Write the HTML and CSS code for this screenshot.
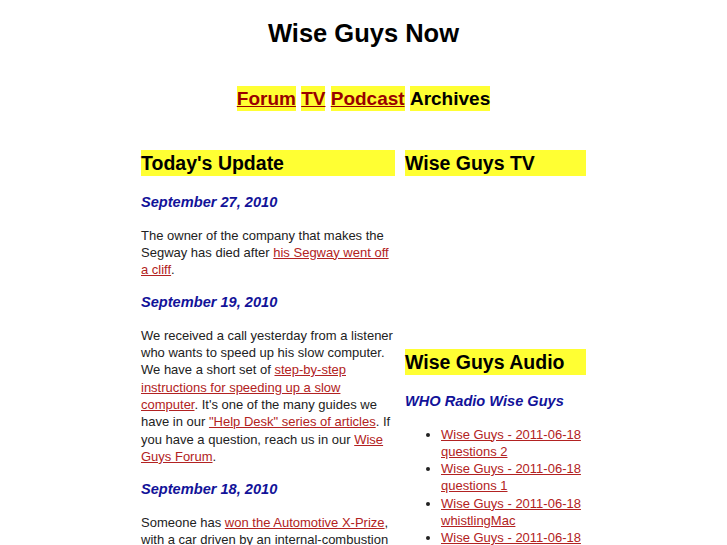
FILE: index.html
```html
<!DOCTYPE html>
<html>
<head>
<meta charset="utf-8">
<title>Wise Guys Now</title>
<link rel="stylesheet" href="styles.css">
</head>
<body>
<div class="page">
  <h1 class="site-title">Wise Guys Now</h1>
  <p class="nav">
    <a class="nav-item" href="#">Forum</a> <a class="nav-item" href="#">TV</a> <a class="nav-item" href="#">Podcast</a> <span class="nav-item nav-current">Archives</span>
  </p>
  <div class="columns">
    <div class="main">
      <h2 class="section-title">Today's Update</h2>
      <h3 class="date">September 27, 2010</h3>
      <p class="entry">The owner of the company that makes the Segway has died after <a href="#">his Segway went off a cliff</a>.</p>
      <h3 class="date">September 19, 2010</h3>
      <p class="entry">We received a call yesterday from a listener who wants to speed up his slow computer. We have a short set of <a href="#">step-by-step instructions for speeding up a slow computer</a>. It's one of the many guides we have in our <a href="#">"Help Desk" series of articles</a>. If you have a question, reach us in our <a href="#">Wise Guys Forum</a>.</p>
      <h3 class="date">September 18, 2010</h3>
      <p class="entry">Someone has <a href="#">won the Automotive X-Prize</a>, with a car driven by an internal-combustion engine that gets more than 100 miles per gallon.</p>
    </div>
    <div class="side">
      <h2 class="section-title">Wise Guys TV</h2>
      <div class="video"></div>
      <h2 class="section-title">Wise Guys Audio</h2>
      <h3 class="date">WHO Radio Wise Guys</h3>
      <ul class="audio-list">
        <li><a href="#">Wise Guys - 2011-06-18 questions 2</a></li>
        <li><a href="#">Wise Guys - 2011-06-18 questions 1</a></li>
        <li><a href="#">Wise Guys - 2011-06-18 whistlingMac</a></li>
        <li><a href="#">Wise Guys - 2011-06-18 intro</a></li>
      </ul>
    </div>
  </div>
</div>
</body>
</html>
```
FILE: styles.css
```css
html, body {
  margin: 0;
  padding: 0;
  background: #ffffff;
}
body {
  font-family: "Liberation Sans", Arial, sans-serif;
  color: #222222;
}
.page {
  width: 445px;
  margin: 0 auto;
}
.site-title {
  font-size: 25.5px;
  line-height: 28px;
  font-weight: bold;
  text-align: center;
  color: #000000;
  margin: 19px 0 0;
}
.nav {
  text-align: center;
  font-size: 19px;
  font-weight: bold;
  line-height: 25px;
  margin: 39px 0 0;
}
.nav-item {
  display: inline-block;
  background: #ffff33;
  line-height: 25px;
  padding: 0;
  color: #000000;
}
a.nav-item {
  color: #990000;
  text-decoration: underline;
}
.columns {
  display: flex;
  gap: 10px;
  margin-top: 39px;
}
.main {
  width: 254px;
}
.side {
  flex: 1;
}
.section-title {
  background: #ffff33;
  color: #000000;
  font-size: 19.5px;
  font-weight: bold;
  line-height: 26px;
  margin: 0;
}
.date {
  color: #121299;
  font-size: 14.6px;
  font-style: italic;
  font-weight: bold;
  line-height: 18px;
  margin: 15px 0 15.5px;
}
.section-title + .date {
  margin-top: 17px;
}
.entry {
  font-size: 13px;
  line-height: 17.3px;
  margin: 0;
}
.main a, .side a {
  color: #b22222;
}
.video {
  height: 173px;
}
.audio-list {
  margin: 0;
  padding-left: 36px;
  font-size: 13px;
  line-height: 17.3px;
}
```
